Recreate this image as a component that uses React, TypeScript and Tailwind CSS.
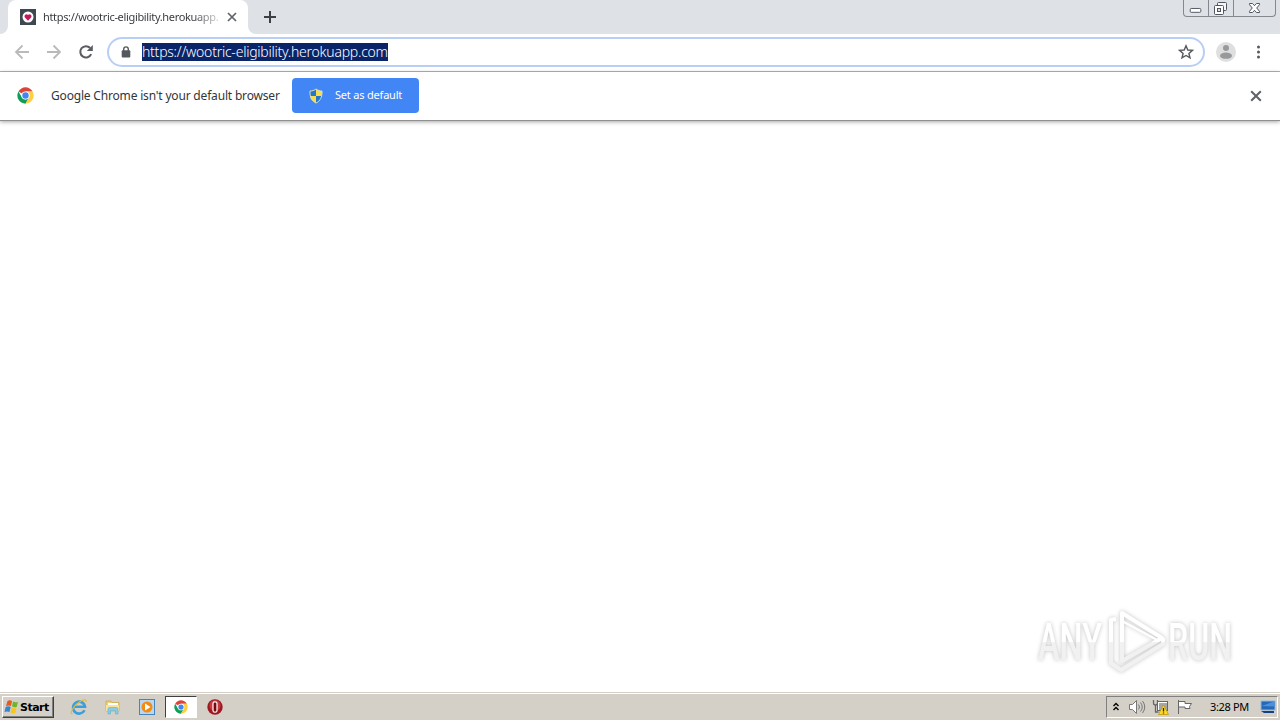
import React from 'react';

function ChromeLogo({ className }: { className: string }) {
  return (
    <svg viewBox="0 0 48 48" className={className}>
      <circle cx="24" cy="24" r="23" fill="#fff" />
      <path d="M24 24 L4.1 12.5 A23 23 0 0 1 43.9 12.5 L24 12.5Z" fill="#db4437" />
      <path d="M4.1 12.5 A23 23 0 0 0 24 47 L34 29.7 L24 35 L14 29.7Z" fill="#0f9d58" />
      <path d="M43.9 12.5 A23 23 0 0 1 24 47 L34 29.7 L35 20 L28 12.5Z" fill="#ffcd40" />
      <circle cx="24" cy="24" r="11.5" fill="#fff" />
      <circle cx="24" cy="24" r="9" fill="#4285f4" />
    </svg>
  );
}

function Cross({ className }: { className: string }) {
  return (
    <svg viewBox="0 0 10 10" className={className}>
      <path d="M1 1 9 9M9 1 1 9" stroke="#5f6368" strokeWidth="1.7" />
    </svg>
  );
}

function WindowControls() {
  return (
    <div className="flex h-[17px] w-[93px] shrink-0 rounded-b-[4px] border border-t-0 border-[#85898f] bg-[#dee1e6]">
      <svg viewBox="0 0 25 16" className="h-4 w-[25px] border-r border-[#85898f]">
        <rect x="6.5" y="8.5" width="11" height="4" rx="1" fill="#fff" stroke="#505560" />
      </svg>
      <svg viewBox="0 0 24 16" className="h-4 w-[25px] border-r border-[#85898f]">
        <rect x="8.500" y="2.500" width="9" height="8" rx="1" fill="#f5f6f8" stroke="#505560" />
        <rect x="5.500" y="5.500" width="9" height="9" rx="1" fill="#fff" stroke="#505560" />
        <rect x="8.500" y="8.500" width="3" height="3" fill="#dee1e6" stroke="#505560" />
      </svg>
      <svg viewBox="0 0 41 16" className="h-4 w-[41px]">
        <path d="M15.5 3.500h3l2 2.200 2-2.200h3v1.200L22.700 8l2.800 3.300v1.200h-3l-2-2.200-2 2.200h-3v-1.200L18.300 8l-2.800-3.300z" fill="#fff" stroke="#505560" />
      </svg>
    </div>
  );
}

function TabStrip() {
  return (
    <div className="flex h-[34px] items-start bg-[#dee1e6]">
      <svg viewBox="0 0 8 8" className="h-2 w-2 self-end">
        <path d="M8 0v8H0a8 8 0 0 0 8-8" fill="#fff" />
      </svg>
      <div className="flex h-[34px] w-[240px] items-center rounded-t-[8px] bg-white pl-3">
        <svg viewBox="0 0 16 16" className="h-4 w-4 shrink-0">
          <rect width="16" height="16" fill="#3e4850" />
          <circle cx="8" cy="8" r="5.500" fill="#fff" />
          <path d="M8 11.700 4.900 8.500a1.900 1.900 0 0 1 3.100-2.400 1.900 1.900 0 0 1 3.100 2.400z" fill="#c5195d" />
        </svg>
        <span className="ml-[7px] w-[176px] bg-linear-to-r from-[#35363a] from-85% to-[#35363a]/20 bg-clip-text text-[11px] leading-4 tracking-[-0.34px] whitespace-nowrap text-transparent">
          https://wootric-eligibility.herokuapp.
        </span>
        <Cross className="ml-2 h-[10px] w-[10px]" />
      </div>
      <svg viewBox="0 0 8 8" className="h-2 w-2 self-end">
        <path d="M0 0v8h8a8 8 0 0 1-8-8" fill="#fff" />
      </svg>
      <svg viewBox="0 0 12 12" className="mt-[11px] ml-2 h-3 w-3">
        <path d="M6 0v12M0 6h12" stroke="#3c4043" strokeWidth="2" />
      </svg>
      <div className="grow" />
      <WindowControls />
      <div className="w-[4px]" />
    </div>
  );
}

function Toolbar() {
  return (
    <div className="flex h-[38px] items-center border-b border-[#b3b4b6] bg-white pr-[16px] pb-px pl-[14px]">
      <svg viewBox="0 0 16 16" className="h-4 w-4">
        <path d="M15 8H2M8.500 1.500 2 8l6.500 6.500" fill="none" stroke="#b9babc" strokeWidth="1.800" />
      </svg>
      <svg viewBox="0 0 16 16" className="ml-4 h-4 w-4">
        <path d="M1 8h13M7.500 1.500 14 8l-6.500 6.500" fill="none" stroke="#b9babc" strokeWidth="1.800" />
      </svg>
      <svg viewBox="0 0 16 16" className="ml-4 h-4 w-4">
        <path d="M13.200 10.200A5.700 5.700 0 1 1 12.200 4" fill="none" stroke="#5a5d61" strokeWidth="2" />
        <path d="M14.800 1v6H8.800z" fill="#5a5d61" />
      </svg>
      <div className="ml-[13px] flex h-[30px] w-[1098px] items-center rounded-full border-2 border-[#b9cef5] bg-white pr-[9px] pl-[12px]">
        <svg viewBox="0 0 10 12" className="h-3 w-[10px]">
          <path d="M2.700 5V3.200a2.300 2.300 0 0 1 4.600 0V5" fill="none" stroke="#55585c" strokeWidth="1.400" />
          <rect x="0.700" y="4.300" width="8.600" height="7.200" rx="1" fill="#55585c" />
        </svg>
        <span className="ml-[11px] h-[18px] w-[246px] bg-[#0a246a] text-[14px] leading-[17px] font-light tracking-[-0.24px] whitespace-nowrap text-white">
          https://wootric-eligibility.herokuapp.com
        </span>
        <div className="grow" />
        <svg viewBox="0 0 16 16" className="h-4 w-4">
          <path d="m8 1.800 1.800 4.200 4.600.4-3.500 3 1.100 4.500L8 11.500l-4 2.400 1.100-4.500-3.500-3L6.200 6z" fill="none" stroke="#55585c" strokeWidth="1.400" />
        </svg>
      </div>
      <svg viewBox="0 0 20 20" className="ml-[11px] h-5 w-5">
        <circle cx="10" cy="10" r="10" fill="#dfdfe0" />
        <circle cx="10" cy="6" r="3" fill="#98999b" />
        <ellipse cx="10" cy="13.700" rx="6" ry="3.100" fill="#98999b" />
      </svg>
      <svg viewBox="0 0 4 14" className="ml-[20px] h-[14px] w-1" fill="#55585c">
        <circle cx="2.500" cy="2" r="1.500" />
        <circle cx="2.500" cy="7" r="1.500" />
        <circle cx="2.500" cy="12" r="1.500" />
      </svg>
    </div>
  );
}

function InfoBar() {
  return (
    <div className="flex h-[49px] items-center border-b border-[#8f8f8f] bg-white pr-[18px] pb-px pl-[17px] shadow-[0_1px_4px_rgba(0,0,0,0.35)]">
      <ChromeLogo className="h-[17px] w-[17px]" />
      <span className="ml-[17px] w-[229px] text-[12px] leading-4 tracking-[-0.18px] whitespace-nowrap text-[#333639]">
        Google Chrome isn't your default browser
      </span>
      <button className="ml-[12px] flex h-[35px] w-[127px] items-center rounded-[4px] bg-[#4285f4] pl-4 text-white">
        <svg viewBox="0 0 16 16" className="h-4 w-4">
          <path d="M8 1C6 2.500 4 3 2 3 1.800 9 3.500 13 8 15z" fill="#2478c8" />
          <path d="M8 1c2 1.500 4 2 6 2C14.200 9 12.500 13 8 15z" fill="#f7dc55" />
          <path d="M2 8h6v7C4.500 13.500 2.600 11.500 2 8" fill="#f7dc55" />
          <path d="M14 8H8v7c3.500-1.500 5.400-3.500 6-7" fill="#2478c8" />
          <path d="M8 1C6 2.500 4 3 2 3 1.700 9 3.700 13 8 15c4.300-2 6.300-6 6-12C12 3 10 2.500 8 1z" fill="none" stroke="#dcdfba" strokeWidth="1" />
        </svg>
        <span className="mb-px ml-[11px] text-[11px] leading-4 tracking-[-0.2px] whitespace-nowrap">Set as default</span>
      </button>
      <div className="grow" />
      <Cross className="h-[12px] w-[12px]" />
    </div>
  );
}

function Watermark() {
  return (
    <svg viewBox="0 0 220 80" className="h-20 w-[220px] drop-shadow-[0_0_2px_rgba(0,0,0,0.24)]">
      <defs>
        <linearGradient id="fade" x1="0" y1="0" x2="0" y2="80" gradientUnits="userSpaceOnUse">
          <stop offset="0.51" stopColor="#ffffff" />
          <stop offset="0.52" stopColor="#f1f1f1" />
        </linearGradient>
      </defs>
      <g fill="url(#fade)" fontFamily="Roboto, sans-serif" fontSize="51" fontWeight="500">
        <text x="13" y="59" textLength="64" lengthAdjust="spacingAndGlyphs">ANY</text>
        <text x="143" y="59" textLength="64" lengthAdjust="spacingAndGlyphs">RUN</text>
      </g>
      <g fill="none" stroke="url(#fade)" strokeWidth="4" strokeLinejoin="round">
        <path d="M97 12 137 37 97 60Z" />
        <path d="M91 18 86 19V62l10 7 42-26V37" />
        <path d="M97 20 134 40" strokeWidth="2" />
      </g>
    </svg>
  );
}

function Taskbar() {
  return (
    <div className="flex h-[28px] items-center border-t border-[#d4d0c8] bg-[#d4d0c8] px-[2px] shadow-[inset_0_1px_0_#fff]">
      <button className="flex h-[22px] w-[52px] items-center border border-t-white border-r-[#404040] border-b-[#404040] border-l-white pl-px shadow-[inset_-1px_-1px_0_#808080]">
        <svg viewBox="0 0 16 16" className="h-4 w-4 shrink-0">
          <path d="M3.500 2q2-1.500 4.500 0L7 7Q4.500 5.800 2 7z" fill="#e8591c" />
          <path d="M9 2.500q2.500 1.500 5 .2L12.700 8Q10.200 9 8 7.300z" fill="#6eb52c" />
          <path d="M1.700 8q2.500-1.300 5 0l-1.200 5Q3 12 .5 13z" fill="#3586d0" />
          <path d="M7.700 8.500q2.500 1.500 4.800.4l-1.300 5Q8.700 15 6.500 13.500z" fill="#fac51b" />
        </svg>
        <span className="pt-[2px] font-['DejaVu_Sans',sans-serif] text-[11px] leading-4 font-bold tracking-[-0.5px] text-black">Start</span>
      </button>
      <svg viewBox="0 0 18 18" className="ml-4 h-[18px] w-[18px]">
        <path d="M14.500 12.200A6 6 0 1 1 15 8.700H4.500" fill="none" stroke="#3a9fdc" strokeWidth="2.600" />
        <path d="M2.500 15.500C-1 17 3 8 9 4.200c4.500-3 8-3.200 7-.2" fill="none" stroke="#e5b93c" strokeWidth="1.200" />
      </svg>
      <svg viewBox="0 0 18 18" className="ml-4 h-[18px] w-[18px]">
        <path d="M2 3h5l1 1.500h7V13H2z" fill="#f0d070" stroke="#c8a548" strokeWidth=".7" />
        <path d="M4 5h10v2H4z" fill="#fff" />
        <path d="M2 7h13v6H2z" fill="#f8e399" />
        <path d="M4 16v-5q0-1.500 1.500-1.500h7Q14 9.500 14 11v5h-2.500v-3.500h-5V16z" fill="#8ccbe8" stroke="#5caed4" strokeWidth=".6" />
      </svg>
      <svg viewBox="0 0 16 16" className="ml-[17px] h-4 w-4">
        <rect x=".5" y=".5" width="15" height="15" fill="#b9d7ee" stroke="#4585bd" />
        <circle cx="8" cy="8" r="5.500" fill="#f28b14" />
        <path d="M6 4.500 11.500 8 6 11.500z" fill="#fff" />
      </svg>
      <div className="ml-[10px] flex h-[22px] w-[32px] items-center justify-center border border-t-[#404040] border-r-white border-b-white border-l-[#404040] bg-white">
        <ChromeLogo className="h-[14px] w-[14px]" />
      </div>
      <svg viewBox="0 0 16 16" className="ml-[10px] h-4 w-4">
        <circle cx="8" cy="8" r="7.700" fill="#9e1820" />
        <circle cx="8" cy="6.500" r="5.500" fill="#c73a40" />
        <rect x="6" y="2.800" width="4" height="10.400" rx="1.800" fill="#7c080f" stroke="#fff" strokeWidth="1.200" />
      </svg>
      <div className="grow" />
      <div className="flex h-[22px] w-[172px] items-center border border-t-[#808080] border-r-white border-b-white border-l-[#808080] pl-[5px]">
        <svg viewBox="0 0 8 10" className="h-[10px] w-2">
          <path d="m1.500 4 2.500-2.500L6.500 4M1.500 8l2.500-2.500L6.500 8" fill="none" stroke="#000" strokeWidth="1.400" />
        </svg>
        <svg viewBox="0 0 18 16" className="ml-[8px] h-4 w-[18px]" fill="none" stroke="#777">
          <path d="M1.500 5.500h3l4-4v13l-4-4h-3z" fill="#fff" />
          <path d="M10.500 5.500q2 2.500 0 5M12.500 3.500q3.500 4.500 0 9M14.500 2q4.500 6 0 12" />
        </svg>
        <svg viewBox="0 0 17 16" className="ml-[6px] h-4 w-[17px]">
          <path d="M1.500 1v3q0 2 2 2t2-2V1M3.500 6v7h3" fill="none" stroke="#666" strokeWidth="1.300" />
          <rect x="6.500" y="3.500" width="9" height="8" fill="#a6a6a6" stroke="#fff" />
          <rect x="5.500" y="2.500" width="10" height="9" fill="none" stroke="#666" />
          <path d="M11.500 6 16.500 15.500h-10z" fill="#ffda24" stroke="#bb9300" strokeWidth=".7" />
          <path d="M11.500 9v3.500m0 1v1" stroke="#222" strokeWidth="1.300" />
        </svg>
        <svg viewBox="0 0 16 16" className="ml-[8px] h-4 w-4">
          <path d="M1.500 1v14M2 2.500h6v2h6.500l-2 3 .5 2H8v-1.500H2" fill="#fff" stroke="#666" />
        </svg>
        <span className="ml-[17px] w-[40px] text-[11px] leading-4 tracking-[-0.35px] whitespace-nowrap text-black">3:28 PM</span>
        <svg viewBox="0 0 16 14" className="ml-[10px] h-[14px] w-4">
          <path d="M1 1h14v9H1z" fill="#2468b8" stroke="#8db8df" />
          <path d="M1.500 6 14 1.500h.5v5z" fill="#4e91d8" />
          <path d="M1 11h13v2H4z" fill="#17417e" />
        </svg>
      </div>
    </div>
  );
}

export default function App() {
  return (
    <div className="flex h-[720px] w-[1280px] flex-col overflow-hidden bg-white font-['Noto_Sans','Open_Sans',sans-serif]">
      <TabStrip />
      <Toolbar />
      <InfoBar />
      <main className="flex grow items-end justify-end pr-[35px] pb-[11px]">
        <Watermark />
      </main>
      <Taskbar />
    </div>
  );
}
